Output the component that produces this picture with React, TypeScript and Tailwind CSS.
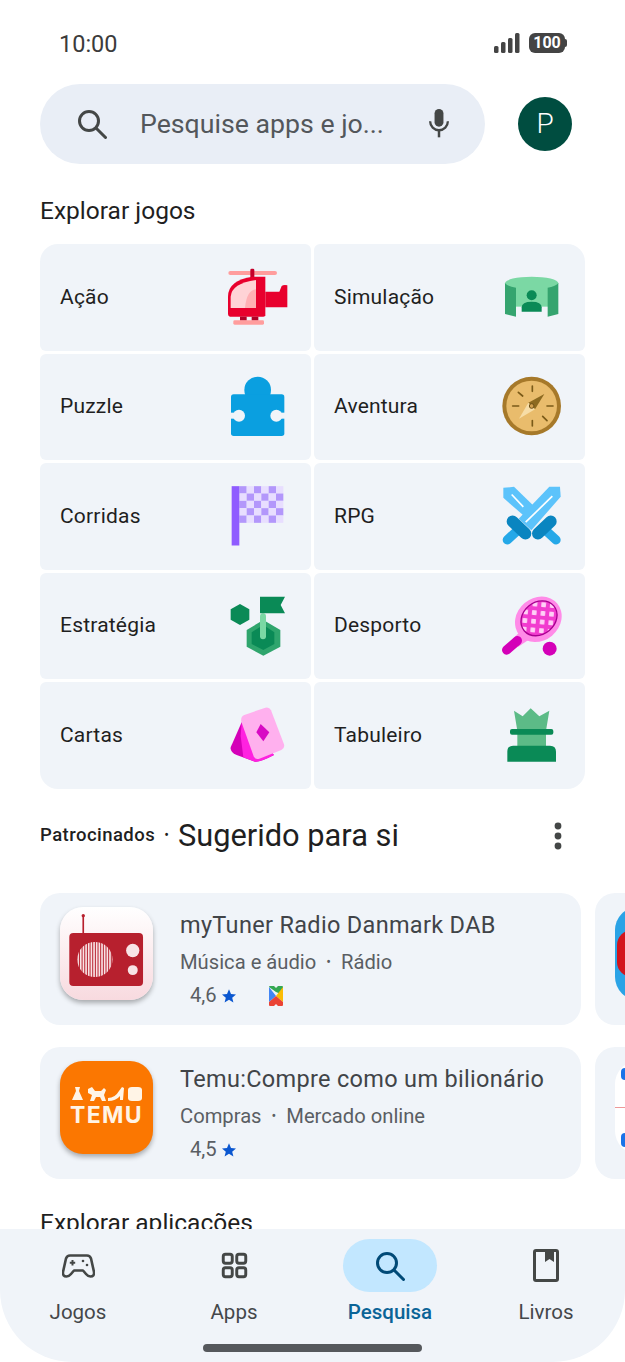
const FONT = "font-['Roboto',sans-serif]";
const CELL_BG = "#f0f4f9";

function Helicopter() {
  return (
    <svg viewBox="60 33 216 216" className="h-[72px] w-[72px]">
      <rect x="85" y="63" width="146" height="12" rx="6" fill="#ff9d9d" />
      <rect x="151" y="56" width="12" height="30" rx="4" fill="#c4002b" />
      <path d="M196 125H238L245 108Q250 104 262 106V172H196Z" fill="#e8002d" />
      <path d="M158 80H196V196Q196 200 190 200H90Q84 200 84 190V140Q84 90 158 80Z" fill="#e8002d" />
      <path d="M168 90V174H92V140Q95 100 168 90Z" fill="#ffd3d6" />
      <path d="M168 118Q140 120 135 174H168Z" fill="#ffb0b4" />
      <rect x="120" y="200" width="20" height="12" fill="#b00028" />
      <rect x="155" y="200" width="20" height="12" fill="#b00028" />
      <rect x="100" y="211" width="92" height="13" rx="4" fill="#ff9d9d" />
    </svg>
  );
}

function Puzzle() {
  return (
    <svg viewBox="60 363 216 216" className="h-[72px] w-[72px]">
      <circle cx="173" cy="420" r="40" fill="#0a9fe0" />
      <rect x="93" y="433" width="160" height="125" rx="8" fill="#0a9fe0" />
      <circle cx="117" cy="497" r="18" fill={CELL_BG} />
      <rect x="90" y="488" width="27" height="18" fill={CELL_BG} />
      <circle cx="229" cy="497" r="18" fill={CELL_BG} />
      <rect x="229" y="488" width="27" height="18" fill={CELL_BG} />
    </svg>
  );
}

function Flag() {
  const cells = [];
  for (let r = 0; r < 5; r++) {
    for (let c = 0; c < 6; c++) {
      cells.push(
        <rect
          key={`${r}-${c}`}
          x={88 + c * 22}
          y={50 + r * 22}
          width="22"
          height="22"
          fill={(r + c) % 2 === 0 ? "#b397fb" : "#e8deff"}
        />,
      );
    }
  }
  return (
    <svg viewBox="30 31.5 216 216" className="h-[72px] w-[72px]">
      {cells}
      <rect x="65" y="50" width="23" height="178" fill="#8f5cff" />
    </svg>
  );
}

function Strategy() {
  return (
    <svg viewBox="30 360 216 216" className="h-[72px] w-[72px]">
      <polygon points="90,402 118,418 118,449 90,465 62,449 62,418" fill="#0a8a56" />
      <polygon points="160,450 211,480 211,530 160,557 110,530 110,480" fill="#2fa56d" />
      <polygon points="160,465 193,487 193,522 160,540 125,522 125,487" fill="#0a8a56" />
      <rect x="150" y="430" width="18" height="78" rx="9" fill="#7bd8a4" />
      <polygon points="150,380 225,380 212,405 225,430 150,430" fill="#0a8a56" />
    </svg>
  );
}

function Cards() {
  return (
    <svg viewBox="30 690 216 216" className="h-[72px] w-[72px]">
      <path d="M95 760L62 835Q60 850 80 858L135 878Q150 880 192 858L120 780Z" fill="#d400b8" />
      <path d="M95 760L92 800L100 865L135 878Q150 880 192 858L120 780Z" fill="#ff22e0" />
      <path d="M103 738L166 716Q178 713 183 724L222 826Q225 838 214 843L148 869Q136 873 131 862L94 758Q91 743 103 738Z" fill="#ffb0ee" />
      <polygon points="152,765 178,790 160,817 139,790" fill="#d80ac4" />
    </svg>
  );
}

function Simulation() {
  return (
    <svg viewBox="42 33 216 216" className="h-[72px] w-[72px]">
      <rect x="105" y="100" width="100" height="70" fill="#7bd8a4" />
      <ellipse cx="155" cy="100" rx="80" ry="20" fill="#7bd8a4" />
      <path d="M75 100Q85 110 108 113V200L75 192Z" fill="#35a46f" />
      <path d="M235 100Q225 110 203 113V200L235 192Z" fill="#35a46f" />
      <circle cx="155" cy="136" r="15" fill="#0a8a56" />
      <path d="M125 185V172Q125 155 155 155Q185 155 185 172V185Z" fill="#0a8a56" />
    </svg>
  );
}

function Compass() {
  return (
    <svg viewBox="42 363 216 216" className="h-[72px] w-[72px]">
      <circle cx="155" cy="468" r="88" fill="#a6792a" />
      <circle cx="155" cy="468" r="76" fill="#e9bc6c" />
      <g stroke="#7a5a18" strokeWidth="5" strokeLinecap="round">
        <line x1="157" y1="408" x2="157" y2="424" />
        <line x1="157" y1="512" x2="157" y2="528" />
        <line x1="98" y1="468" x2="116" y2="468" />
        <line x1="201" y1="468" x2="219" y2="468" />
        <line x1="115" y1="427" x2="128" y2="438" />
        <line x1="188" y1="499" x2="201" y2="512" />
      </g>
      <polygon points="193,432 165,478 145,458" fill="#8c6a20" />
      <polygon points="117,506 145,458 165,478" fill="#f7dda6" />
      <circle cx="155" cy="468" r="7" fill="#d0a050" stroke="#6c4f15" strokeWidth="3" />
    </svg>
  );
}

function Swords() {
  return (
    <svg viewBox="12 31.5 216 216" className="h-[72px] w-[72px]">
      <polygon points="40,55 72,52 140,118 112,148 40,85" fill="#5cc3fb" />
      <line x1="65" y1="75" x2="100" y2="112" stroke="#ffffff" strokeWidth="5" />
      <line x1="88" y1="178" x2="52" y2="211" stroke="#25a8e8" strokeWidth="28" strokeLinecap="round" />
      <line x1="162" y1="178" x2="198" y2="211" stroke="#25a8e8" strokeWidth="28" strokeLinecap="round" />
      <polygon points="178,52 210,52 212,82 124,182 86,148" fill="#5cc3fb" />
      <line x1="187" y1="80" x2="107" y2="158" stroke="#ffffff" strokeWidth="5" />
      <line x1="68" y1="156" x2="106" y2="192" stroke="#0a85c0" strokeWidth="36" strokeLinecap="round" />
      <line x1="182" y1="156" x2="144" y2="192" stroke="#0a85c0" strokeWidth="36" strokeLinecap="round" />
    </svg>
  );
}

function Racket() {
  return (
    <svg viewBox="12 360 216 216" className="h-[72px] w-[72px]">
      <defs>
        <pattern id="strings" width="26" height="26" patternUnits="userSpaceOnUse" patternTransform="rotate(45)">
          <rect width="26" height="26" fill="#f23ccf" />
          <rect x="6" y="6" width="14" height="14" rx="2" fill="#ffd0f6" />
        </pattern>
      </defs>
      <polygon points="65,510 95,480 115,510 85,530" fill="#ff8be8" />
      <line x1="50" y1="540" x2="82" y2="512" stroke="#d400b8" strokeWidth="28" strokeLinecap="round" />
      <ellipse cx="145" cy="448" rx="74" ry="64" transform="rotate(-40 145 448)" fill="#ff8be8" />
      <ellipse cx="147" cy="445" rx="58" ry="48" transform="rotate(-40 147 445)" fill="url(#strings)" stroke="#a80090" strokeWidth="4" />
      <circle cx="179" cy="536" r="21" fill="#d400b8" />
    </svg>
  );
}

function Rook() {
  return (
    <svg viewBox="12 690 216 216" className="h-[72px] w-[72px]">
      <polygon points="72,725 98,742 122,718 148,742 178,725 168,785 82,785" fill="#5cbb87" />
      <rect x="82" y="795" width="86" height="38" fill="#5cbb87" />
      <rect x="60" y="780" width="130" height="17" rx="6" fill="#0a8a56" />
      <path d="M52 878V848Q52 830 70 830H180Q198 830 198 848V878Z" fill="#0a8a56" />
    </svg>
  );
}

const categories = [
  { left: "Ação", LeftIcon: Helicopter, right: "Simulação", RightIcon: Simulation },
  { left: "Puzzle", LeftIcon: Puzzle, right: "Aventura", RightIcon: Compass },
  { left: "Corridas", LeftIcon: Flag, right: "RPG", RightIcon: Swords },
  { left: "Estratégia", LeftIcon: Strategy, right: "Desporto", RightIcon: Racket },
  { left: "Cartas", LeftIcon: Cards, right: "Tabuleiro", RightIcon: Rook },
];

function CategoryCell({ label, Icon, className }: { label: string; Icon: () => React.ReactNode; className: string }) {
  return (
    <div className={`flex h-[106.5px] items-center justify-between bg-[#f0f4f9] pl-5 pr-[19px] ${className}`}>
      <span className="text-[21px] tracking-[0.2px] text-[#1f1f1f]">{label}</span>
      <Icon />
    </div>
  );
}

function MyTunerIcon() {
  const stripes = [];
  for (let x = 142; x < 250; x += 8) {
    stripes.push(<rect key={x} x={x} y="155" width="5" height="110" fill="#f9e3e5" />);
  }
  return (
    <div className="h-[93px] w-[93px] shrink-0 overflow-hidden rounded-[23px] shadow-[0_3px_5px_rgba(0,0,0,0.3)]">
      <svg viewBox="90 52 280 280" className="h-full w-full">
        <defs>
          <linearGradient id="tunerBg" x1="0" y1="0" x2="0" y2="1">
            <stop offset="0" stopColor="#ffffff" />
            <stop offset="1" stopColor="#f8dadf" />
          </linearGradient>
          <clipPath id="speaker">
            <circle cx="195" cy="210" r="53" />
          </clipPath>
        </defs>
        <rect x="90" y="52" width="280" height="280" fill="url(#tunerBg)" />
        <line x1="160" y1="76" x2="160" y2="135" stroke="#b7202e" strokeWidth="5" />
        <circle cx="160" cy="78" r="5" fill="#b7202e" />
        <rect x="118" y="130" width="222" height="160" rx="12" fill="#b7202e" />
        <g clipPath="url(#speaker)">{stripes}</g>
        <circle cx="309" cy="183" r="20" fill="#f8e4e6" />
        <circle cx="309" cy="242" r="15" fill="#f8e4e6" />
      </svg>
    </div>
  );
}

function TemuIcon() {
  return (
    <div className="flex h-[93px] w-[93px] shrink-0 flex-col items-center justify-center rounded-[23px] bg-[#fb7701] shadow-[0_3px_5px_rgba(0,0,0,0.3)]">
      <svg viewBox="0 0 72 16" className="h-4 w-[72px]" fill="#fff4e6">
        <path d="M4 1H9L8 5L12 14H1L5 5Z" />
        <path d="M17 3L21 1L24 5H30L33 2L35 4L33 9L35 15H31L29 11H25L23 15H19L21 9L17 7Z" />
        <path d="M37 12Q44 12 48 5L51 1L53 2L52 14H49L49 10Q45 15 37 15Z" />
        <path d="M57 4Q57 1 61 1H67Q71 1 71 4V12Q71 15 67 15H61Q57 15 57 12Z" />
      </svg>
      <div className="font-['Inter',sans-serif] text-[23px] leading-[26px] font-bold tracking-[1.4px] text-[#fff4e6]">
        TEMU
      </div>
    </div>
  );
}

function PassIcon() {
  return (
    <svg viewBox="0 0 14 20" className="ml-[32px] h-5 w-[14px]">
      <path d="M0 1Q0 0 1 0H5L7 2L9 0H13Q14 0 14 1V9L7 6Z" fill="#34a853" />
      <path d="M0 1L7 10L0 16Z" fill="#4285f4" />
      <path d="M14 1L7 10L14 16Z" fill="#fbbc04" />
      <path d="M7 10L14 16V19Q14 20 13 20H9L7 18L5 20H1Q0 20 0 19V16Z" fill="#ea4335" />
    </svg>
  );
}

function Star() {
  return (
    <svg viewBox="0 0 24 24" className="ml-[4px] h-4 w-4" fill="#0b57d0">
      <path d="M12 2l3 7 7.5.6-5.7 4.9 1.8 7.4L12 17.8 5.4 21.9l1.8-7.4L1.5 9.6 9 9z" />
    </svg>
  );
}

function AppCard({
  icon,
  title,
  category,
  genre,
  rating,
  pass,
}: {
  icon: React.ReactNode;
  title: string;
  category: string;
  genre: string;
  rating: string;
  pass?: boolean;
}) {
  return (
    <div className="flex h-[132px] w-[541px] shrink-0 items-start gap-[27px] rounded-[20px] bg-[#f0f4f9] pl-5 pt-[14px]">
      {icon}
      <div className="mt-[3px] min-w-0">
        <div className="text-[23.5px] leading-[30px] tracking-[0.32px] text-[#414448]">{title}</div>
        <div className="mt-[10px] flex items-center text-[20.2px] leading-[24px] text-[#5a5e63]">
          <span>{category}</span>
          <span className="mx-[10px] text-[14px]">•</span>
          <span>{genre}</span>
        </div>
        <div className="mt-[10px] flex h-6 items-center pl-[10px] text-[20.2px] text-[#5a5e63]">
          <span>{rating}</span>
          <Star />
          {pass && <PassIcon />}
        </div>
      </div>
    </div>
  );
}

function PeekCard({ children }: { children: React.ReactNode }) {
  return (
    <div className="h-[132px] w-[541px] shrink-0 rounded-[20px] bg-[#f0f4f9] pl-5 pt-[14px]">
      {children}
    </div>
  );
}

function NavItem({ label, active, children }: { label: string; active?: boolean; children: React.ReactNode }) {
  return (
    <div className="flex w-[156px] flex-col items-center">
      <div
        className={`flex h-[53px] w-[94px] items-center justify-center rounded-full ${active ? "bg-[#c2e7ff]" : ""}`}
      >
        {children}
      </div>
      <span className={`mt-[6px] text-[20.5px] leading-[28px] ${active ? "font-medium text-[#0b6497]" : "text-[#44474a]"}`}>
        {label}
      </span>
    </div>
  );
}

function SearchGlyph({ color, className }: { color: string; className: string }) {
  return (
    <svg viewBox="0 0 30 30" className={className} fill="none" stroke={color} strokeWidth="3">
      <circle cx="12" cy="12" r="9.5" />
      <line x1="19" y1="19" x2="28.5" y2="28.5" strokeLinecap="round" />
    </svg>
  );
}

export default function App() {
  return (
    <div className={`flex h-[1362px] w-[625px] flex-col overflow-hidden bg-white ${FONT}`}>
      <div className="min-h-0 flex-1 overflow-hidden">
        {/* status bar */}
        <div className="flex h-[84px] items-start justify-between pl-[59px] pr-[58px] pt-[29px]">
          <span className="text-[23.5px] leading-[30px] text-[#3b3b3b]">10:00</span>
          <div className="flex items-center gap-[9px] pt-[4px]">
            <svg viewBox="0 0 26 20" className="h-5 w-[26px]" fill="#444444">
              <rect x="0" y="13" width="4.5" height="7" rx="1.5" />
              <rect x="7" y="9" width="4.5" height="11" rx="1.5" />
              <rect x="14" y="5" width="4.5" height="15" rx="1.5" />
              <rect x="21" y="0" width="4.5" height="20" rx="1.5" />
            </svg>
            <div className="flex items-center">
              <div className="flex h-5 w-9 items-center justify-center rounded-[6px] bg-[#444444] text-[16px] leading-none font-bold text-white">
                100
              </div>
              <div className="h-2 w-[2px] rounded-r-sm bg-[#444444]" />
            </div>
          </div>
        </div>

        {/* search */}
        <div className="flex items-center pl-10 pr-[53px]">
          <div className="flex h-[80px] w-[445px] items-center rounded-full bg-[#e9eef6] pl-[37px] pr-[34px]">
            <SearchGlyph color="#444746" className="h-[30px] w-[30px]" />
            <span className="ml-[33px] flex-1 text-[26.7px] leading-none text-[#53575b]">Pesquise apps e jo...</span>
            <svg viewBox="0 0 24 36" className="h-[32px] w-[24px]" fill="none">
              <rect x="7" y="1" width="10" height="20" rx="5" fill="#444746" />
              <path d="M2 15a10 10 0 0 0 20 0" stroke="#444746" strokeWidth="2.6" />
              <line x1="12" y1="25" x2="12" y2="33" stroke="#444746" strokeWidth="2.8" />
            </svg>
          </div>
          <div className="ml-auto flex h-[54px] w-[54px] items-center justify-center rounded-full bg-[#004d40] text-[28px] font-light text-white">
            P
          </div>
        </div>

        {/* categories */}
        <div className="px-10">
          <h2 className="mt-[31px] text-[24.5px] leading-[32px] font-normal text-[#1f1f1f]">Explorar jogos</h2>
          <div className="mt-[17px] grid w-[545px] grid-cols-2 gap-[3px]">
            {categories.map((row, i) => {
              const first = i === 0;
              const last = i === categories.length - 1;
              return [
                <CategoryCell
                  key={row.left}
                  label={row.left}
                  Icon={row.LeftIcon}
                  className={`${first ? "rounded-tl-[18px] rounded-tr-[6px]" : "rounded-t-[6px]"} ${last ? "rounded-bl-[18px] rounded-br-[6px]" : "rounded-b-[6px]"}`}
                />,
                <CategoryCell
                  key={row.right}
                  label={row.right}
                  Icon={row.RightIcon}
                  className={`${first ? "rounded-tr-[18px] rounded-tl-[6px]" : "rounded-t-[6px]"} ${last ? "rounded-br-[18px] rounded-bl-[6px]" : "rounded-b-[6px]"}`}
                />,
              ];
            })}
          </div>
        </div>

        {/* suggested */}
        <div className="mt-[28px] flex items-center justify-between pl-10 pr-[63px]">
          <div className="flex items-center">
            <span className="text-[18.5px] font-medium tracking-[0.45px] text-[#1f1f1f]">Patrocinados</span>
            <span className="mx-[9px] text-[14px] text-[#1f1f1f]">•</span>
            <span className="text-[30.8px] leading-[38px] text-[#1f1f1f]">Sugerido para si</span>
          </div>
          <svg viewBox="0 0 8 28" className="h-[28px] w-2" fill="#444746">
            <circle cx="4" cy="4" r="3.4" />
            <circle cx="4" cy="14" r="3.4" />
            <circle cx="4" cy="24" r="3.4" />
          </svg>
        </div>

        <div className="mt-[38px] flex flex-col gap-[22px] overflow-hidden pl-10">
          <div className="flex gap-[14px]">
            <AppCard
              icon={<MyTunerIcon />}
              title="myTuner Radio Danmark DAB"
              category="Música e áudio"
              genre="Rádio"
              rating="4,6"
              pass
            />
            <PeekCard>
              <div className="flex h-[93px] w-[93px] items-center overflow-hidden rounded-[23px] bg-[#2aa3e6]">
                <div className="ml-[2px] h-[47px] w-[30px] rounded-full bg-[#d3141c]" />
              </div>
            </PeekCard>
          </div>
          <div className="flex gap-[14px]">
            <AppCard
              icon={<TemuIcon />}
              title="Temu:Compre como um bilionário"
              category="Compras"
              genre="Mercado online"
              rating="4,5"
            />
            <PeekCard>
              <div className="h-[93px] w-[93px] overflow-hidden rounded-[23px] bg-white pt-[7px]">
                <div className="ml-[6px] h-3 w-[6px] rounded-l-sm bg-[#1a73e8]" />
                <div className="mt-[27px] h-px w-3 bg-[#ee9999]" />
                <div className="ml-[6px] mt-[25px] h-[14px] w-[6px] rounded-l-sm bg-[#1a73e8]" />
              </div>
            </PeekCard>
          </div>
        </div>

        <h2 className="mt-[28px] pl-10 text-[24.5px] leading-[32px] font-normal text-[#1f1f1f]">Explorar aplicações</h2>
      </div>

      {/* bottom nav */}
      <div className="relative h-[133px] shrink-0 rounded-b-[72px] bg-[#f0f4f9] pt-[10px]">
        <div className="flex">
          <NavItem label="Jogos">
            <svg viewBox="0 0 33 24" className="h-6 w-[33px]" fill="none" stroke="#444746" strokeWidth="2.6">
              <path d="M8 1.5H25Q28 1.5 29 4.5L32 18Q32.5 22.5 28.5 22.5Q26 22.5 24 20L21 16.5H12L9 20Q7 22.5 4.5 22.5Q0.5 22.5 1 18L4 4.5Q5 1.5 8 1.5Z" strokeLinejoin="round" />
              <path d="M10.5 6V11.5M7.8 8.7H13.2" strokeWidth="2" />
              <circle cx="21" cy="7" r="1.3" fill="#444746" stroke="none" />
              <circle cx="25" cy="11" r="1.3" fill="#444746" stroke="none" />
            </svg>
          </NavItem>
          <NavItem label="Apps">
            <svg viewBox="0 0 24 24" className="h-[27px] w-[27px]" fill="none" stroke="#444746" strokeWidth="2.6">
              <rect x="2" y="2" width="8" height="8" rx="2" />
              <rect x="14" y="2" width="8" height="8" rx="2" />
              <rect x="2" y="14" width="8" height="8" rx="2" />
              <rect x="14" y="14" width="8" height="8" rx="2" />
            </svg>
          </NavItem>
          <NavItem label="Pesquisa" active>
            <SearchGlyph color="#004a77" className="h-[30px] w-[30px]" />
          </NavItem>
          <NavItem label="Livros">
            <svg viewBox="0 0 26 33" className="h-[33px] w-[26px]">
              <rect x="1.5" y="1.5" width="23" height="30" rx="1.5" fill="none" stroke="#444746" strokeWidth="3" />
              <path d="M12 1H21V13L16.5 10L12 13Z" fill="#444746" />
            </svg>
          </NavItem>
        </div>
        <div className="absolute bottom-[10px] left-[203px] h-[8px] w-[219px] rounded-full bg-[#55585c]" />
      </div>
    </div>
  );
}
